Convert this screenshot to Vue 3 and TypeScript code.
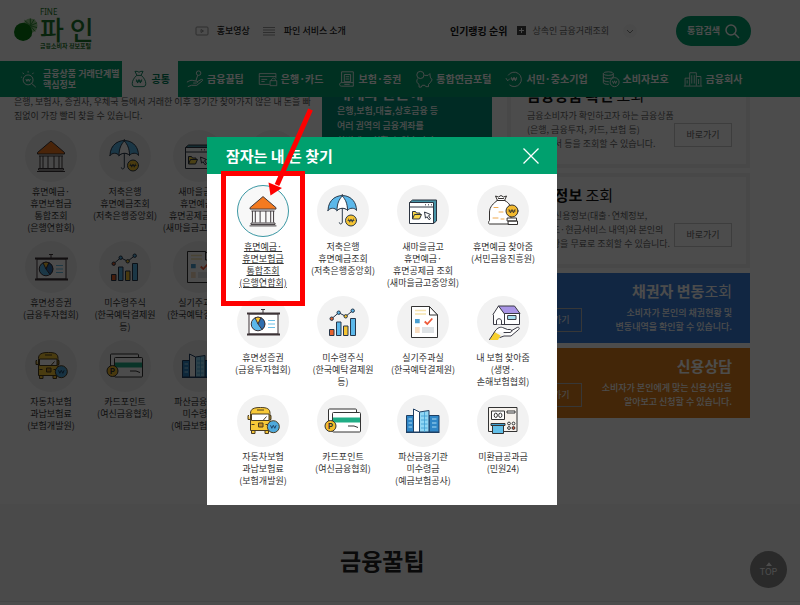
<script setup lang="ts">
interface Service {
  icon: string
  lines: string[]
  active?: boolean
  mark?: string
}

interface NavItem {
  icon: string
  lines: string[]
  current?: boolean
}

const navItems: NavItem[] = [
  { icon: 'n-search', lines: ['금융상품 거래단계별', '핵심정보'] },
  { icon: 'n-bag', lines: ['공통'], current: true },
  { icon: 'n-tip', lines: ['금융꿀팁'] },
  { icon: 'n-card', lines: ['은행·카드'] },
  { icon: 'n-doc', lines: ['보험·증권'] },
  { icon: 'n-pig', lines: ['통합연금포털'] },
  { icon: 'n-won', lines: ['서민·중소기업'] },
  { icon: 'n-coins', lines: ['소비자보호'] },
  { icon: 'n-city', lines: ['금융회사'] },
]

const services: Service[] = [
  { icon: 's-bank', lines: ['휴면예금·', '휴면보험금', '통합조회', '(은행연합회)'], active: true },
  { icon: 's-umbrella', lines: ['저축은행', '휴면예금조회', '(저축은행중앙회)'] },
  { icon: 's-window', lines: ['새마을금고', '휴면예금·', '휴면공제금 조회', '(새마을금고중앙회)'] },
  { icon: 's-sack', lines: ['휴면예금 찾아줌', '(서민금융진흥원)'] },
  { icon: 's-board', lines: ['휴면성증권', '(금융투자협회)'] },
  { icon: 's-chart', lines: ['미수령주식', '(한국예탁결제원', '등)'] },
  { icon: 's-paper', lines: ['실기주과실', '(한국예탁결제원)'] },
  { icon: 's-house', lines: ['내 보험 찾아줌', '(생명·', '손해보험협회)'] },
  { icon: 's-bus', lines: ['자동차보험', '과납보험료', '(보험개발원)'] },
  { icon: 's-cards', lines: ['카드포인트', '(여신금융협회)'], mark: 'P' },
  { icon: 's-towers', lines: ['파산금융기관', '미수령금', '(예금보험공사)'] },
  { icon: 's-machine', lines: ['미환급공과금', '(민원24)'] },
]

const infoCards = [
  {
    strong: '금융상품 확인',
    light: ' 조회',
    lines: ['금융소비자가 확인하고자 하는 금융상품', '(은행, 금융투자, 카드, 보험 등)', '의 내역서 등을 조회할 수 있습니다.'],
  },
  {
    strong: '신용정보',
    light: ' 조회',
    lines: ['본인의 신용정보(대출·연체정보,', '신용카드·현금서비스 내역)와 본인의', '대출현황을 무료로 조회할 수 있습니다.'],
  },
]

const banners = [
  { tone: 'blue', strong: '채권자 변동', light: '조회', lines: ['소비자가 본인의 채권현황 및', '변동내역을 확인할 수 있습니다.'] },
  { tone: 'orange', strong: '신용상담', light: '', lines: ['소비자가 본인에게 맞는 신용상담을', '알아보고 신청할 수 있습니다.'] },
]
</script>

<template>
  <div class="page">
    <svg class="sprite" aria-hidden="true">
      <!-- navigation icons -->
      <g fill="none" stroke="currentColor" stroke-linecap="round" stroke-linejoin="round">
        <symbol id="n-search" viewBox="0 0 20 20">
          <circle cx="9" cy="11" r="5.5" /><path d="M13 15l4.5 4M9 1v2M3 3l1.3 1.6M15 3l-1.3 1.6M1 8h1M6.500 10l1.200 2.600L9 10l1.300 2.600L11.500 10" />
        </symbol>
        <symbol id="n-bag" viewBox="0 0 20 20">
          <path d="M7.500 5.500L5.500 1.500h2.500l2 1 2-1h2.500l-2 4M7 6h6M7.500 6C4.500 8.500 2.500 12 2.500 15c0 2.500 1 3.500 3 3.500h9c2 0 3-1 3-3.500 0-3-2-6.500-5-9" /><path d="M7 10.500l1.500 4 1.500-4 1.500 4 1.500-4M6.500 12.300h7" />
        </symbol>
        <symbol id="n-tip" viewBox="0 0 20 20">
          <circle cx="14" cy="3.500" r="2.500" /><path d="M13 6l-2 6M1 13.500c2-1 4-2.500 6-2l5 1c1.500.5 1 2-.5 2H8M12.500 13l4.500-2.500c1.500-.5 2 .8 1 1.600L12 17H6l-4 1.500" />
        </symbol>
        <symbol id="n-card" viewBox="0 0 24 20">
          <path d="M14 16.500H1.500v-13h20v6M1.500 7h20M4 10.500h7M4 13h4" /><path d="M16 12c0-4 5-4 5 0M14.500 12h8v6h-8z" />
        </symbol>
        <symbol id="n-doc" viewBox="0 0 20 20">
          <path d="M4 2h13v16H4c-3 0-3-4 0-4V2M7 5h7v8H7zM8.500 7.500h4M8.500 10h4M4 14h13M7 16h6" />
        </symbol>
        <symbol id="n-pig" viewBox="0 0 20 20">
          <circle cx="6" cy="5.500" r="4" /><path d="M10.500 6h4l2-2 .5 4 2 3-2 3-2 2v2.500h-3L11 17H8l-1 2H4.500v-3c-3-2-3-4-1.500-6.500" />
        </symbol>
        <symbol id="n-won" viewBox="0 0 20 20">
          <path d="M3.500 6A8 8 0 1 1 5 16.500M1 9l2 3 2.500-2.500M7 8l1.500 4L10 8l1.500 4L13 8M6.500 10h7" />
        </symbol>
        <symbol id="n-coins" viewBox="0 0 20 20">
          <ellipse cx="7" cy="4" rx="5.500" ry="2" /><path d="M1.500 4v10c0 1.300 3 2 6 2M12.500 4v4M1.500 7.500c0 2.500 11 2.500 11 0M1.500 11c0 1.300 3 2 6 2" /><circle cx="14" cy="13.500" r="5" /><path d="M11.500 12l1.300 3 1.200-3 1.200 3 1.300-3" />
        </symbol>
        <symbol id="n-city" viewBox="0 0 24 20">
          <path d="M1 18.500h22M8 18V2.500h8V18M2.500 18V9H8M16 7h5.500v11M10.500 5.500v10M13.500 5.500v10M5 11.500v4M18.700 10v6" />
        </symbol>
      </g>

      <!-- service icons, drawn inside a 52px disc -->
      <symbol id="s-bank" viewBox="0 0 52 52">
        <g stroke="#3b3538" stroke-width="1" stroke-linejoin="round">
          <path d="M26 11L39.500 22.500V24h-27v-1.500z" fill="#f47a1f" />
          <path d="M14 26h24M15 26v12M18 26v12M23 26v12M29 26v12M34 26v12M37 26v12" fill="none" />
          <path d="M13.500 38.500h25v1.500h-25zM12 41.500h28" fill="#fff" />
        </g>
      </symbol>
      <symbol id="s-umbrella" viewBox="0 0 52 52">
        <g stroke="#2b3a4a" stroke-linecap="round" stroke-linejoin="round">
          <path d="M11 25.500C11 5.500 39.500 5.500 39.500 25.500c-1.500-3-7-3-9 0-2-3-8-3-10.500 0-2-3-7-3-9 0z" fill="#5cb8ea" />
          <path d="M20 25.500c0-7 2-11 5.300-14.500 3.200 3.500 5.200 7.500 5.200 14.500-2-3-8-3-10.500 0z" fill="#fff" />
          <path d="M25.300 9.500v1.500M25.300 23.500V37c0 2.500-3 2.500-3 .8" fill="none" />
          <circle cx="34" cy="35.500" r="5.500" fill="#f6c433" />
          <path d="M31.500 34l1.200 3.200L34 34l1.300 3.200 1.200-3.200M31 35.500h6" fill="none" stroke-width=".8" />
        </g>
      </symbol>
      <symbol id="s-window" viewBox="0 0 52 52">
        <g stroke="#2c3440" stroke-linejoin="round">
          <path d="M12.500 17.500l3-2.500h24v21l-3 2.500z" fill="#4795a8" />
          <path d="M12.500 17.500h24v21h-24zM12.500 22h24" fill="#fff" />
          <path d="M28 19.800h1M31 19.800h1M34 19.800h1" />
          <path d="M15.500 34v-7.500h3l1 1.500H23v1.500" fill="#f8d648" /><path d="M15.500 34l2-4.500h7L22.500 34z" fill="#f8d648" />
          <path d="M27.500 27l6 2.500-2 1.200 2 3-1.500 1-2-3-1.500 1.500z" fill="#fff" />
        </g>
      </symbol>
      <symbol id="s-sack" viewBox="0 0 52 52">
        <g stroke="#33302f" stroke-linejoin="round" stroke-linecap="round">
          <path d="M20.500 15.500l-2-4.500 3 1 2.500-1.500 2.500 1.500 3-1-2 4.500C33 18 34 22 34 27v12H12.500c-1.500 0-1-3 0-3.500V27c0-5 4-9 8-11.500z" fill="#fff" />
          <path d="M20 15.500h8M21.500 13.500h5" fill="none" />
          <path d="M17 22.500h4M22 27h4M16 33h5M24 34h3" stroke="#efaa50" />
          <circle cx="35" cy="26" r="6" fill="#f2b92e" />
          <path d="M32 24.500l1.500 3.500 1.500-3.500 1.500 3.500 1.500-3.500M31.800 26h6.500" fill="none" stroke-width=".8" />
          <path d="M30.500 33h9v3h-9zM31.500 36h9v3.500h-9z" fill="#fff" />
        </g>
      </symbol>
      <symbol id="s-board" viewBox="0 0 52 52">
        <g stroke="#3d3336">
          <path d="M12 18h29v20H12z" fill="#fff" />
          <path d="M10 17.500h33M10 38.500h33" stroke-width="2" /><path d="M24 13.500h4M26 13.500V17" />
          <circle cx="21" cy="28" r="6.800" fill="#5cb8ea" />
          <path d="M21 28l-3-6.200A6.800 6.800 0 0 1 24 21.800z" fill="#f6c433" /><path d="M21 28l3-6.200A6.800 6.800 0 0 1 25 33.500z" fill="#2f6fb0" />
          <path d="M31 24.500h7M31 28h7M31 31.500h7" stroke="#6cc0e8" />
        </g>
      </symbol>
      <symbol id="s-chart" viewBox="0 0 52 52">
        <g stroke="#26364a">
          <path d="M12.500 33.500h4.500v6h-4.500z" fill="#e8622c" /><path d="M19.500 26h4.500v13.500h-4.500z" fill="#5cb8ea" />
          <path d="M26.500 30h4.500v9.500h-4.500z" fill="#f6c433" /><path d="M33.500 22.500H38.500v17h-5z" fill="#5cb8ea" />
          <path d="M14.700 22.700l7-6 7 3.600 7-5.600" fill="none" />
          <circle cx="14.700" cy="22.700" r="1.700" fill="#e8622c" /><circle cx="21.700" cy="16.700" r="1.700" fill="#5cb8ea" />
          <circle cx="28.700" cy="20.300" r="1.700" fill="#f6c433" /><circle cx="35.700" cy="14.700" r="1.700" fill="#5cb8ea" />
        </g>
      </symbol>
      <symbol id="s-paper" viewBox="0 0 52 52">
        <path d="M14.500 10.500h18l8 8.500v22.500h-26z" fill="#fff" stroke="#333" stroke-linejoin="round" />
        <path d="M32.500 10.500V19h8z" fill="#fff" stroke="#333" stroke-linejoin="round" />
        <path d="M18 14.500h11M18 18h11" stroke="#f5e3ae" stroke-width="1.500" />
        <path d="M18 23h4.700v4.300H18z" fill="#4a9fd0" /><path d="M27.700 25.500l2.600 2.500 5-5.500" fill="none" stroke="#ee5a3a" stroke-width="1.800" />
        <path d="M18 31h4.700v6H18z" fill="#f8dcc0" /><path d="M25 31h12v6H25z" fill="#dfe3e6" />
      </symbol>
      <symbol id="s-house" viewBox="0 0 52 52">
        <g stroke="#3a3a44" stroke-linejoin="round" stroke-linecap="round">
          <path d="M16.500 18v10.500h26V17.500" fill="#fff" />
          <path d="M21.500 10h16l5.500 7.500H27z" fill="#a995e6" /><path d="M16 18.500L21.500 10l6 8v10.500M19.500 28.500v-3.500c0-3 5-3 5 0v3.500" fill="#fff" />
          <path d="M31 19.500h8v4h-8z" fill="#a8dff0" />
          <path d="M12.500 44l5-8 6 3.500-2.500 4.500z" fill="#f7d02e" stroke="none" /><path d="M12.500 43.500l5-7.500" />
          <path d="M17.500 36c2-3.500 5-5.500 8-4.500l5 2h3c2 .5 1.500 3-.5 3h-6M34 35l6-3.500c2-.8 3 .8 1.500 2.200L34 40h-7l-4 1.500" fill="#fff" />
        </g>
      </symbol>
      <symbol id="s-bus" viewBox="0 0 52 52">
        <g stroke="#4a3c20" stroke-linejoin="round">
          <path d="M14.500 35.500h3.500v3h-3.500zM28 35.500h3.500v3H28zM12 20.500h-1v4h2M32 20.500h2v4h-1.500" fill="#f4c335" />
          <path d="M13.500 35.500v-17c0-4.500 3-6 10-6s9.500 1.500 9.500 6v17z" fill="#f8c938" />
          <path d="M14.500 19h17.500v6.500H14.500z" fill="#fff" /><path d="M20 15h7M21.500 28h4.500v4h-4.500zM14.500 29.500h3M28.500 29.500h3M26 25.500l3.500-4" fill="#c98f20" />
          <circle cx="36.300" cy="31.700" r="6" fill="#4fa9dc" /><path d="M33.500 30.300l1.300 3 1.500-3 1.500 3 1.300-3" fill="none" stroke="#1d4468" />
        </g>
      </symbol>
      <symbol id="s-cards" viewBox="0 0 52 52">
        <g stroke="#333" stroke-linejoin="round">
          <rect x="11.500" y="14" width="28" height="19" rx="1" fill="#fff" /><rect x="15.500" y="17.500" width="28" height="19.500" rx="1" fill="#fff" />
          <path d="M16 22.500h27v5H16z" fill="#20ad85" stroke="none" /><path d="M31 31h6l4 1.500" fill="none" />
          <circle cx="13.500" cy="31" r="5.500" fill="#f4bd2c" />
        </g>
      </symbol>
      <symbol id="s-towers" viewBox="0 0 52 52">
        <g stroke="#1e3f63" stroke-linejoin="round">
          <path d="M9.500 20.500H17V37H9.500zM32 20.500h10V37H32z" fill="#2f86c6" />
          <path d="M22.500 17l9.500-1.500V37h-9.500z" fill="#8fd6f4" /><path d="M16.500 14l6 3v20h-6z" fill="#fff" />
          <path d="M11.500 24H15M11.500 28H15M11.500 32H15M35 24h4.500M35 28h4.500M35 32h4.500" stroke="#a9dcf5" /><path d="M27.500 17v20M24 21h6.500M24 25h6.500M24 29h6.500M24 33h6.500" stroke="#3d9dd0" stroke-width=".8" />
          <path d="M9 37.500h33.500" />
        </g>
      </symbol>
      <symbol id="s-machine" viewBox="0 0 52 52">
        <g stroke="#333" stroke-linejoin="round" fill="#fff">
          <path d="M11.500 12.500h28.500v24H11.500z" fill="#f7f3ee" /><path d="M14.500 16h13v8.500h-13zM30 16h8v2h-8z" />
          <ellipse cx="18.800" cy="20.300" rx="1.600" ry="2.200" /><ellipse cx="23.300" cy="20.300" rx="1.600" ry="2.200" />
          <path d="M15.500 30v8.500h11V30" fill="#62bfe8" /><path d="M14 28.500h14v2H14z" fill="#3f9fd0" />
          <circle cx="32" cy="28.500" r="1.400" /><circle cx="36.500" cy="28.500" r="1.400" /><circle cx="32" cy="33" r="1.400" /><circle cx="36.500" cy="33" r="1.400" fill="#e05a40" />
        </g>
      </symbol>
    </svg>

    <header class="header">
      <a class="logo" href="#">
        <svg class="logo-mark" viewBox="0 0 25 28" aria-hidden="true">
          <circle cx="17" cy="9.500" r="7.500" fill="#9ccf90" />
          <path d="M17 9.500V2M17 9.500l4-6.500M17 9.500l7-3M17 9.500l7 2M17 9.500l5 6M17 9.500L11 4" stroke="#2c8c34" stroke-width="1" />
          <circle cx="9.500" cy="16" r="9.500" fill="#087a12" />
        </svg>
        <span class="logo-text">
          <span class="logo-en">FINE</span>
          <span class="logo-ko">파 인</span>
          <span class="logo-sub">금융소비자 정보포털</span>
        </span>
      </a>
      <div class="quick">
        <a href="#"><svg viewBox="0 0 14 12" aria-hidden="true"><rect x="1" y="2" width="12" height="8" rx="1" /><path d="M6 4.500v3l2.500-1.500z" /></svg>홍보영상</a>
        <a href="#"><svg viewBox="0 0 14 12" aria-hidden="true"><path d="M1 2.500h12M1 5h12M1 7.500h12M1 10h12" /></svg>파인 서비스 소개</a>
      </div>
      <div class="rank">
        <strong>인기랭킹 순위</strong>
        <svg class="rank-mark" viewBox="0 0 9 9" aria-hidden="true"><rect width="9" height="9" fill="#444" /><path d="M4.500 2v5M2 4.500h5" stroke="#fff" /></svg>
        <a href="#">상속인 금융거래조회</a>
        <button class="rank-more" type="button" aria-label="순위 펼치기">
          <svg viewBox="0 0 14 14" aria-hidden="true"><path d="M4 6l3 3 3-3" fill="none" stroke="#888" /></svg>
        </button>
      </div>
      <button class="search" type="button">
        통합검색
        <svg viewBox="0 0 16 16" aria-hidden="true"><circle cx="7" cy="7" r="5" fill="none" stroke="#fff" stroke-width="1.500" /><path d="M10.800 10.800L15 15" stroke="#fff" stroke-width="1.500" /></svg>
      </button>
    </header>

    <nav class="nav">
      <a v-for="item in navItems" :key="item.icon" href="#" :class="{ current: item.current, small: item.lines.length > 1 }">
        <svg :class="{ wide: item.icon === 'n-card' || item.icon === 'n-city' }" fill="none" stroke="currentColor" aria-hidden="true"><use :href="'#' + item.icon" /></svg>
        <span><span v-for="line in item.lines" :key="line" class="line">{{ line }}</span></span>
      </a>
    </nav>

    <main class="main">
      <section class="dormant">
        <p class="intro">
          은행, 보험사, 증권사, 우체국 등에서 거래한 이후 장기간 찾아가지 않은 내 돈을 빠<br />짐없이 가장 빨리 찾을 수 있습니다.
        </p>
        <div class="services">
          <a v-for="s in services" :key="s.icon" class="service" href="#">
            <svg class="disc" aria-hidden="true"><use :href="'#' + s.icon" /><text v-if="s.mark" x="13.500" y="34">{{ s.mark }}</text></svg>
            <span v-for="line in s.lines" :key="line" class="line">{{ line }}</span>
          </a>
        </div>
      </section>

      <section class="accounts">
        <h2>내계좌 한눈에</h2>
        <p>은행,보험,대출,상호금융 등<br />여러 권역의 금융계좌를<br />한번에 조회할 수 있습니다.</p>
      </section>

      <aside class="side">
        <section v-for="card in infoCards" :key="card.strong" class="info">
          <h2>{{ card.strong }}<span>{{ card.light }}</span></h2>
          <div class="info-body">
            <p><span v-for="line in card.lines" :key="line" class="line">{{ line }}</span></p>
            <a class="go" href="#">바로가기</a>
          </div>
        </section>
        <section v-for="b in banners" :key="b.tone" class="banner" :class="b.tone">
          <a class="go" href="#">바로가기</a>
          <div>
            <h2>{{ b.strong }}<span>{{ b.light }}</span></h2>
            <p><span v-for="line in b.lines" :key="line" class="line">{{ line }}</span></p>
          </div>
        </section>
      </aside>
    </main>

    <section class="tips">
      <h2>금융꿀팁</h2>
    </section>

    <a class="top" href="#">
      <svg viewBox="0 0 8 5" aria-hidden="true"><path d="M4 0l4 5H0z" fill="#fff" /></svg>
      TOP
    </a>

    <div class="overlay">
      <div class="dialog" role="dialog" aria-modal="true" aria-labelledby="dialog-title">
        <div class="dialog-head">
          <h2 id="dialog-title">잠자는 내 돈 찾기</h2>
          <button type="button" aria-label="닫기">
            <svg viewBox="0 0 18 18" aria-hidden="true"><path d="M1.500 1.500l15 15M16.500 1.500l-15 15" stroke="#fff" stroke-width="1.300" /></svg>
          </button>
        </div>
        <div class="services">
          <a v-for="s in services" :key="s.icon" class="service" :class="{ active: s.active }" href="#">
            <svg class="disc" aria-hidden="true"><use :href="'#' + s.icon" /><text v-if="s.mark" x="13.500" y="34">{{ s.mark }}</text></svg>
            <span v-for="line in s.lines" :key="line" class="line">{{ line }}</span>
          </a>
        </div>
      </div>
      <svg class="marker" viewBox="0 0 100 206" aria-hidden="true">
        <rect x="4.500" y="72.500" width="79" height="130" fill="none" stroke="#fe0000" stroke-width="5" />
        <path d="M91.500 8.500L58 84" stroke="#fe0000" stroke-width="5" />
        <path d="M49.500 81.500L51.500 94.500 63 87z" fill="#fe0000" />
      </svg>
    </div>
  </div>
</template>

<style>
body {
  margin: 0;
}
</style>

<style scoped>
.page {
  position: relative;
  min-height: 100vh;
  overflow: hidden;
  background: #fff;
  color: #333;
  font: 9px/14px "Noto Sans CJK KR", "Noto Sans", sans-serif;
  white-space: nowrap;
}
.page *,
.page *::before {
  box-sizing: border-box;
}
h2,
p {
  margin: 0;
}
a {
  color: inherit;
  text-decoration: none;
}
button {
  padding: 0;
  border: 0;
  background: none;
  font: inherit;
  color: inherit;
}
svg {
  display: block;
  flex: none;
}
.line {
  display: block;
}
.sprite {
  position: absolute;
  width: 0;
  height: 0;
}

/* header */
.header {
  position: relative;
  z-index: 2;
  display: flex;
  align-items: center;
  height: 61px;
  padding: 0 49px 0 14px;
  background: #fff;
}
.logo {
  display: flex;
  align-items: center;
  gap: 2px;
  padding-bottom: 2px;
  color: #1d7a2c;
}
.logo-mark {
  width: 24px;
  height: 28px;
}
.logo-text {
  display: grid;
}
.logo-en {
  font: 8px/8px "Noto Sans", sans-serif;
}
.logo-ko {
  font-size: 26px;
  font-weight: 500;
  line-height: 25px;
}
.logo-sub {
  font-size: 6px;
  font-weight: 700;
  line-height: 10px;
}
.quick {
  display: flex;
  gap: 12px;
  margin-left: 101px;
  color: #222;
  font-weight: 500;
}
.quick a {
  display: flex;
  align-items: center;
  gap: 8px;
}
.quick svg {
  width: 14px;
  height: 12px;
  fill: none;
  stroke: #999;
}
.rank {
  display: flex;
  align-items: center;
  margin-left: auto;
  margin-right: 39px;
  color: #666;
}
.rank strong {
  margin-right: 10px;
  color: #111;
  font-size: 10px;
}
.rank-mark {
  width: 9px;
  height: 9px;
  margin-right: 6px;
}
.rank-more {
  margin-left: 14px;
  border-radius: 50%;
  background: #f8f8f8;
}
.rank-more svg {
  width: 14px;
  height: 14px;
}
.search {
  display: flex;
  align-items: center;
  justify-content: center;
  gap: 4px;
  width: 75px;
  height: 30px;
  border-radius: 15px;
  background: #00a06e;
  color: #fff;
  font-weight: 700;
}
.search svg {
  width: 16px;
  height: 16px;
}

/* navigation */
.nav {
  position: relative;
  z-index: 2;
  display: flex;
  gap: 14px;
  height: 36px;
  padding-left: 20px;
  background: #00a06e;
  color: #fff;
  font-size: 10px;
  font-weight: 700;
}
.nav a {
  display: flex;
  align-items: center;
  gap: 3px;
}
.nav svg {
  width: 18px;
  height: 18px;
}
.nav svg.wide {
  width: 20px;
}
.nav .small {
  gap: 5px;
  margin-right: -12px;
  font-size: 9px;
  line-height: 11px;
}
.nav .current {
  gap: 4px;
  margin-right: -6px;
  padding: 0 8px;
  background: #fff;
  color: #00805a;
}

/* page content, scrolled under the navigation */
.main {
  display: flex;
  align-items: flex-start;
  margin-top: -24px;
  padding: 0 50px 72px 14px;
}
.dormant {
  width: 296px;
  padding-top: 22px;
}
.intro {
  color: #555;
}
.services {
  display: grid;
  grid-template-columns: repeat(4, 1fr);
  row-gap: 7px;
}
.dormant .services {
  margin-top: 7px;
}
.service {
  display: flex;
  flex-direction: column;
  align-items: center;
  line-height: 12px;
}
.disc {
  width: 52px;
  height: 52px;
  margin-bottom: 4px;
  border-radius: 50%;
  background: #f2f2f2;
}
.disc text {
  fill: #333;
  font-size: 8px;
  font-weight: 700;
  text-anchor: middle;
}
.accounts {
  width: 170px;
  height: 200px;
  margin-left: 12px;
  padding: 10px 15px;
  background: #008f78;
  color: #fff;
  font-weight: 500;
  line-height: 15px;
}
.accounts h2 {
  font-size: 15px;
  line-height: 20px;
}
.side {
  display: flex;
  flex: 1;
  flex-direction: column;
  gap: 5px;
  margin-left: 15px;
}
.side h2 {
  font-size: 15px;
  line-height: 20px;
}
.side h2 span {
  font-weight: 400;
  white-space: pre;
}
.info {
  padding: 8px 14px 13px 16px;
  border: 4px solid #f0f0f0;
  color: #666;
}
.info h2 {
  margin-bottom: 4px;
  color: #111;
}
.info-body {
  display: flex;
  align-items: flex-start;
  justify-content: space-between;
}
.info-body p {
  width: 0;
}
.go {
  width: 58px;
  height: 24px;
  border: 1px solid currentColor;
  line-height: 22px;
  text-align: center;
}
.info .go {
  margin-top: 14px;
  border-color: #ccc;
}
.banner {
  display: flex;
  align-items: flex-end;
  justify-content: space-between;
  padding: 8px 18px 9px 17px;
  color: #fff;
  text-align: right;
}
.banner h2 {
  margin-bottom: 5px;
}
.banner p {
  font-weight: 500;
}
.banner .go {
  margin-bottom: 2px;
  border-color: #b8b8b8;
}
.banner.blue {
  background: #3a80dc;
}
.banner.orange {
  background: #e0801c;
}
.tips {
  height: 98px;
  padding: 38px 0 0 340px;
  border-bottom: 1px solid #e6e6e6;
  background: #f8f8f8;
}
.tips h2 {
  color: #222;
  font-size: 23px;
  line-height: 36px;
}
.top {
  position: fixed;
  right: 13px;
  bottom: 17px;
  display: flex;
  flex-direction: column;
  align-items: center;
  justify-content: center;
  gap: 1px;
  width: 37px;
  height: 37px;
  border-radius: 50%;
  background: #8c8c8c;
  color: #fff;
  line-height: 10px;
}
.top svg {
  width: 6px;
  height: 4px;
}

/* dialog layer */
.overlay {
  position: fixed;
  inset: 0;
  z-index: 5;
  background: rgba(0, 0, 0, 0.7);
}
.dialog {
  position: absolute;
  top: 137px;
  left: 207px;
  width: 350px;
  background: #fff;
}
.dialog-head {
  display: flex;
  align-items: center;
  justify-content: space-between;
  height: 37px;
  padding: 0 17px 0 19px;
  background: #00a06e;
  color: #fff;
}
.dialog-head h2 {
  font-size: 15px;
  line-height: 20px;
}
.dialog-head svg {
  width: 18px;
  height: 18px;
}
.dialog .services {
  padding: 11px 14px 18px 16px;
}
.active {
  text-decoration: underline;
}
.active .disc {
  background: #f8f8f8;
  border: 1px solid #3c98a4;
}
.marker {
  position: absolute;
  top: 101px;
  left: 219px;
  width: 100px;
  height: 206px;
}
</style>
